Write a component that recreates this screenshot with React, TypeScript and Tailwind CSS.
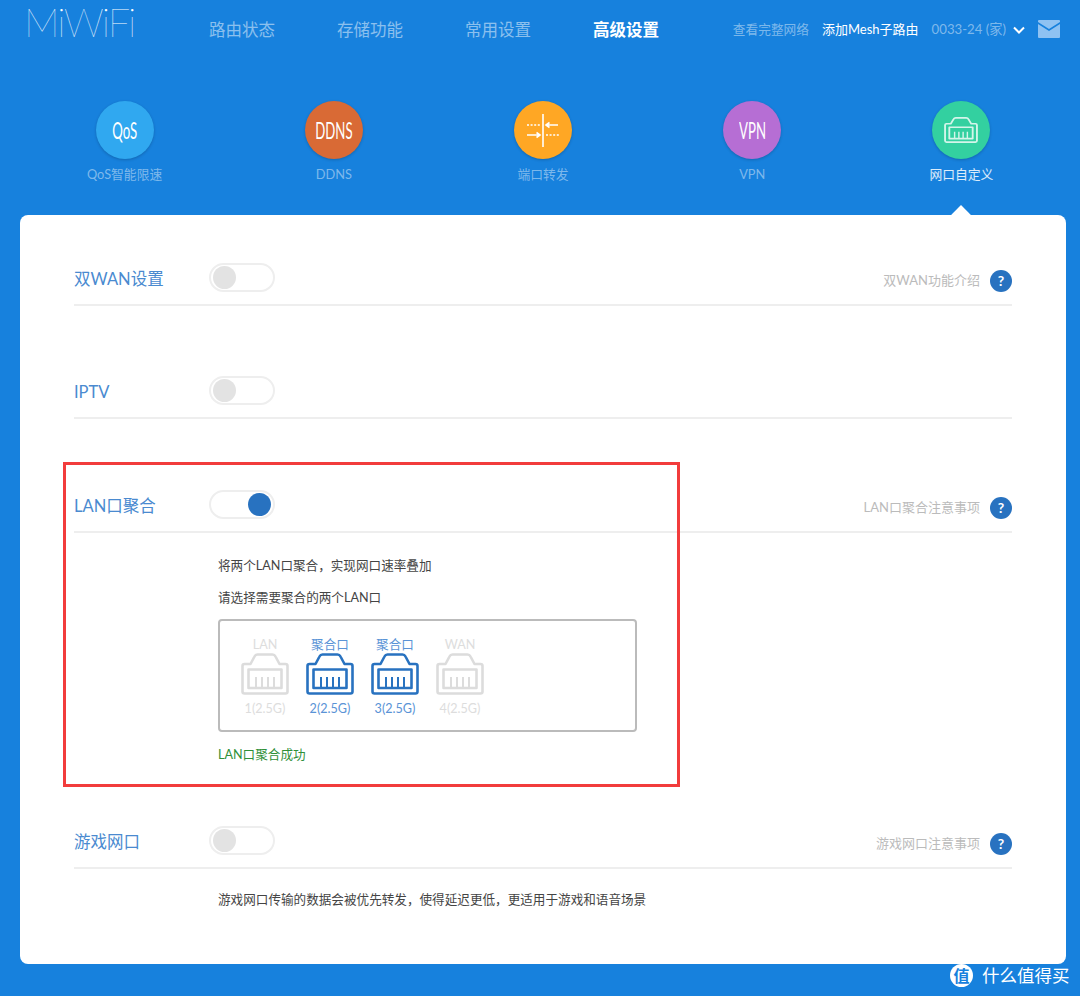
const font = "font-['Lato','Noto_Sans_CJK_SC',sans-serif]";

function PortIcon({ className }: { className?: string }) {
  return (
    <svg viewBox="0 0 48 42" preserveAspectRatio="none" className={className} fill="none" stroke="currentColor" strokeWidth="2.6" strokeLinejoin="round">
      <path d="M3.5 11H9.5L13.5 3.5Q14.5 1.5 16.5 1.5H31.5Q33.5 1.5 34.5 3.5L38.5 11H44.5Q46.5 11 46.5 13V38.5Q46.5 40.5 44.5 40.5H3.5Q1.5 40.5 1.5 38.5V13Q1.5 11 3.5 11Z" />
      <rect x="7.5" y="16.5" width="33" height="18.5" />
      <path d="M15 24V35M21 24V35M27 24V35M33 24V35" strokeWidth="2" />
    </svg>
  );
}

function Toggle({ on }: { on?: boolean }) {
  return (
    <div className={`flex h-[29px] w-[66px] items-center rounded-full border-2 border-[#eeeeee] bg-white px-[2px] ${on ? "justify-end" : ""}`}>
      <div className={`size-[23px] rounded-full ${on ? "bg-[#2872c0]" : "bg-[#e3e3e3]"}`} />
    </div>
  );
}

function Row({ label, on, help, className }: { label: string; on?: boolean; help?: string; className?: string }) {
  return (
    <div className={`flex h-[55px] items-center border-b-2 border-[#eeeeee] ${className ?? ""}`}>
      <div className="w-[135px] pt-[3px] text-[16.5px] text-[#4a8ad0]">{label}</div>
      <Toggle on={on} />
      {help && (
        <div className="ml-auto flex items-center gap-[10px] pt-[6px]">
          <span className="text-[13px] text-[#bbbbbb]">{help}</span>
          <span className="flex size-[22px] items-center justify-center rounded-full bg-[#2872c0] text-[14px] font-bold text-white">?</span>
        </div>
      )}
    </div>
  );
}

const tabs = [
  { label: "QoS智能限速", badge: "QoS", color: "bg-[#30a8f0]" },
  { label: "DDNS", badge: "DDNS", color: "bg-[#d96a35]" },
  { label: "端口转发", color: "bg-[#ffa724]", icon: "forward" },
  { label: "VPN", badge: "VPN", color: "bg-[#b66ed4]" },
  { label: "网口自定义", color: "bg-[#33d0a0]", icon: "port", active: true },
];

const ports = [
  { top: "LAN", bottom: "1(2.5G)" },
  { top: "聚合口", bottom: "2(2.5G)", on: true },
  { top: "聚合口", bottom: "3(2.5G)", on: true },
  { top: "WAN", bottom: "4(2.5G)" },
];

export default function App() {
  return (
    <div className={`relative h-[996px] w-[1080px] overflow-hidden bg-[#1781dd] ${font}`}>
      <header className="flex h-[60px] items-start">
        <div className="ml-[24px] w-[185px] text-[40px] leading-[44px] font-thin tracking-[-2px] text-white">MiWiFi</div>
        <nav className="flex gap-[62px] pt-[19px] text-[16.5px] leading-[22px] text-white/50">
          <span>路由状态</span>
          <span>存储功能</span>
          <span>常用设置</span>
          <span className="font-bold text-white">高级设置</span>
        </nav>
        <div className="ml-auto flex items-center pr-[20px] pt-[20px] text-[12.7px] leading-[18px]">
          <span className="text-white/45">查看完整网络</span>
          <span className="ml-[13px] text-[13px] text-white">添加Mesh子路由</span>
          <span className="ml-[13px] text-[13.2px] text-white/45">0033-24 (家)</span>
          <svg viewBox="0 0 12 8" className="ml-[7px] mt-[2px] h-[8px] w-[12px]" fill="none" stroke="white" strokeWidth="2">
            <path d="M1 1.5L6 6.5L11 1.5" />
          </svg>
          <svg viewBox="0 0 22 18" className="ml-[13px] h-[18px] w-[22px]">
            <path d="M1 0H21Q22 0 22 1V2L11 9L0 2V1Q0 0 1 0Z" fill="#8fc2f2" />
            <path d="M0 4L11 11L22 4V17Q22 18 21 18H1Q0 18 0 17Z" fill="#8fc2f2" />
          </svg>
        </div>
      </header>

      <div className="mx-[20px] grid h-[155px] w-[1046px] grid-cols-5 pt-[41px]">
        {tabs.map((t) => (
          <div key={t.label} className="flex flex-col items-center">
            <div className={`flex size-[58px] items-center justify-center rounded-full shadow-[0_1px_3px_rgba(0,0,0,0.2)] ${t.color}`}>
              {t.badge && <span className="scale-x-[0.55] text-[24px] leading-none text-white">{t.badge}</span>}
              {t.icon === "forward" && (
                <svg viewBox="0 0 36 36" className="size-[36px]" fill="none" stroke="white" strokeWidth="1.6">
                  <path d="M18 2V35" />
                  <path d="M2 13H16M21 23H34" strokeDasharray="2 1.6" />
                  <path d="M21 13H33M24.5 10.5L21 13L24.5 15.5" />
                  <path d="M2 23H15M11.5 20.5L15 23L11.5 25.5" />
                </svg>
              )}
              {t.icon === "port" && <PortIcon className="h-[26px] w-[34px] text-[#d4f5ea]" />}
            </div>
            <div className={`mt-[6px] text-[12.8px] leading-[18px] ${t.active ? "text-white/85" : "text-white/45"}`}>{t.label}</div>
          </div>
        ))}
      </div>

      <main className="relative mx-[20px] h-[749px] w-[1046px] rounded-[8px] bg-white px-[54px] pt-[36px]">
        <div className="absolute right-[98px] top-[-7px] size-[14px] rotate-45 bg-white" />

        <Row label="双WAN设置" help="双WAN功能介绍" />
        <Row label="IPTV" className="mt-[58px]" />
        <Row label="LAN口聚合" on help="LAN口聚合注意事项" className="mt-[59px]" />

        <div className="pl-[144px] text-[12.6px] leading-[18px] text-[#444444]">
          <p className="mt-[24px]">将两个LAN口聚合，实现网口速率叠加</p>
          <p className="mt-[14px]">请选择需要聚合的两个LAN口</p>
          <div className="mt-[12px] flex h-[113px] w-[419px] gap-[17px] rounded-[4px] border-2 border-[#bbbbbb] pl-[21px] pt-[15px]">
            {ports.map((p) => (
              <div key={p.bottom} className={`flex w-[48px] flex-col items-center ${p.on ? "text-[#2872c0]" : "text-[#dcdcdc]"}`}>
                <span className={`h-[17px] whitespace-nowrap leading-[18px] ${p.on ? "text-[#5a93d6]" : "text-[#dddddd]"}`}>{p.top}</span>
                <PortIcon className="h-[42px] w-[48px]" />
                <span className={`mt-[5px] whitespace-nowrap ${p.on ? "text-[#5a93d6]" : "text-[#dddddd]"}`}>{p.bottom}</span>
              </div>
            ))}
          </div>
          <p className="mt-[14px] text-[#2f9038]">LAN口聚合成功</p>
        </div>

        <Row label="游戏网口" help="游戏网口注意事项" className="mt-[50px]" />
        <p className="mt-[22px] pl-[144px] text-[12.6px] leading-[18px] text-[#444444]">游戏网口传输的数据会被优先转发，使得延迟更低，更适用于游戏和语音场景</p>
      </main>

      {/* annotation drawn over the screenshot */}
      <div className="absolute left-[63px] top-[462px] h-[325px] w-[617px] border-[3px] border-[#f23c3c]" />

      <div className="absolute left-[950px] top-[964px] flex items-center">
        <span className="flex size-[23px] items-center justify-center rounded-full bg-white text-[16px] font-bold text-[#1781dd]">值</span>
        <span className="ml-[9px] text-[17.5px] leading-[23px] whitespace-nowrap text-white">什么值得买</span>
      </div>
    </div>
  );
}
